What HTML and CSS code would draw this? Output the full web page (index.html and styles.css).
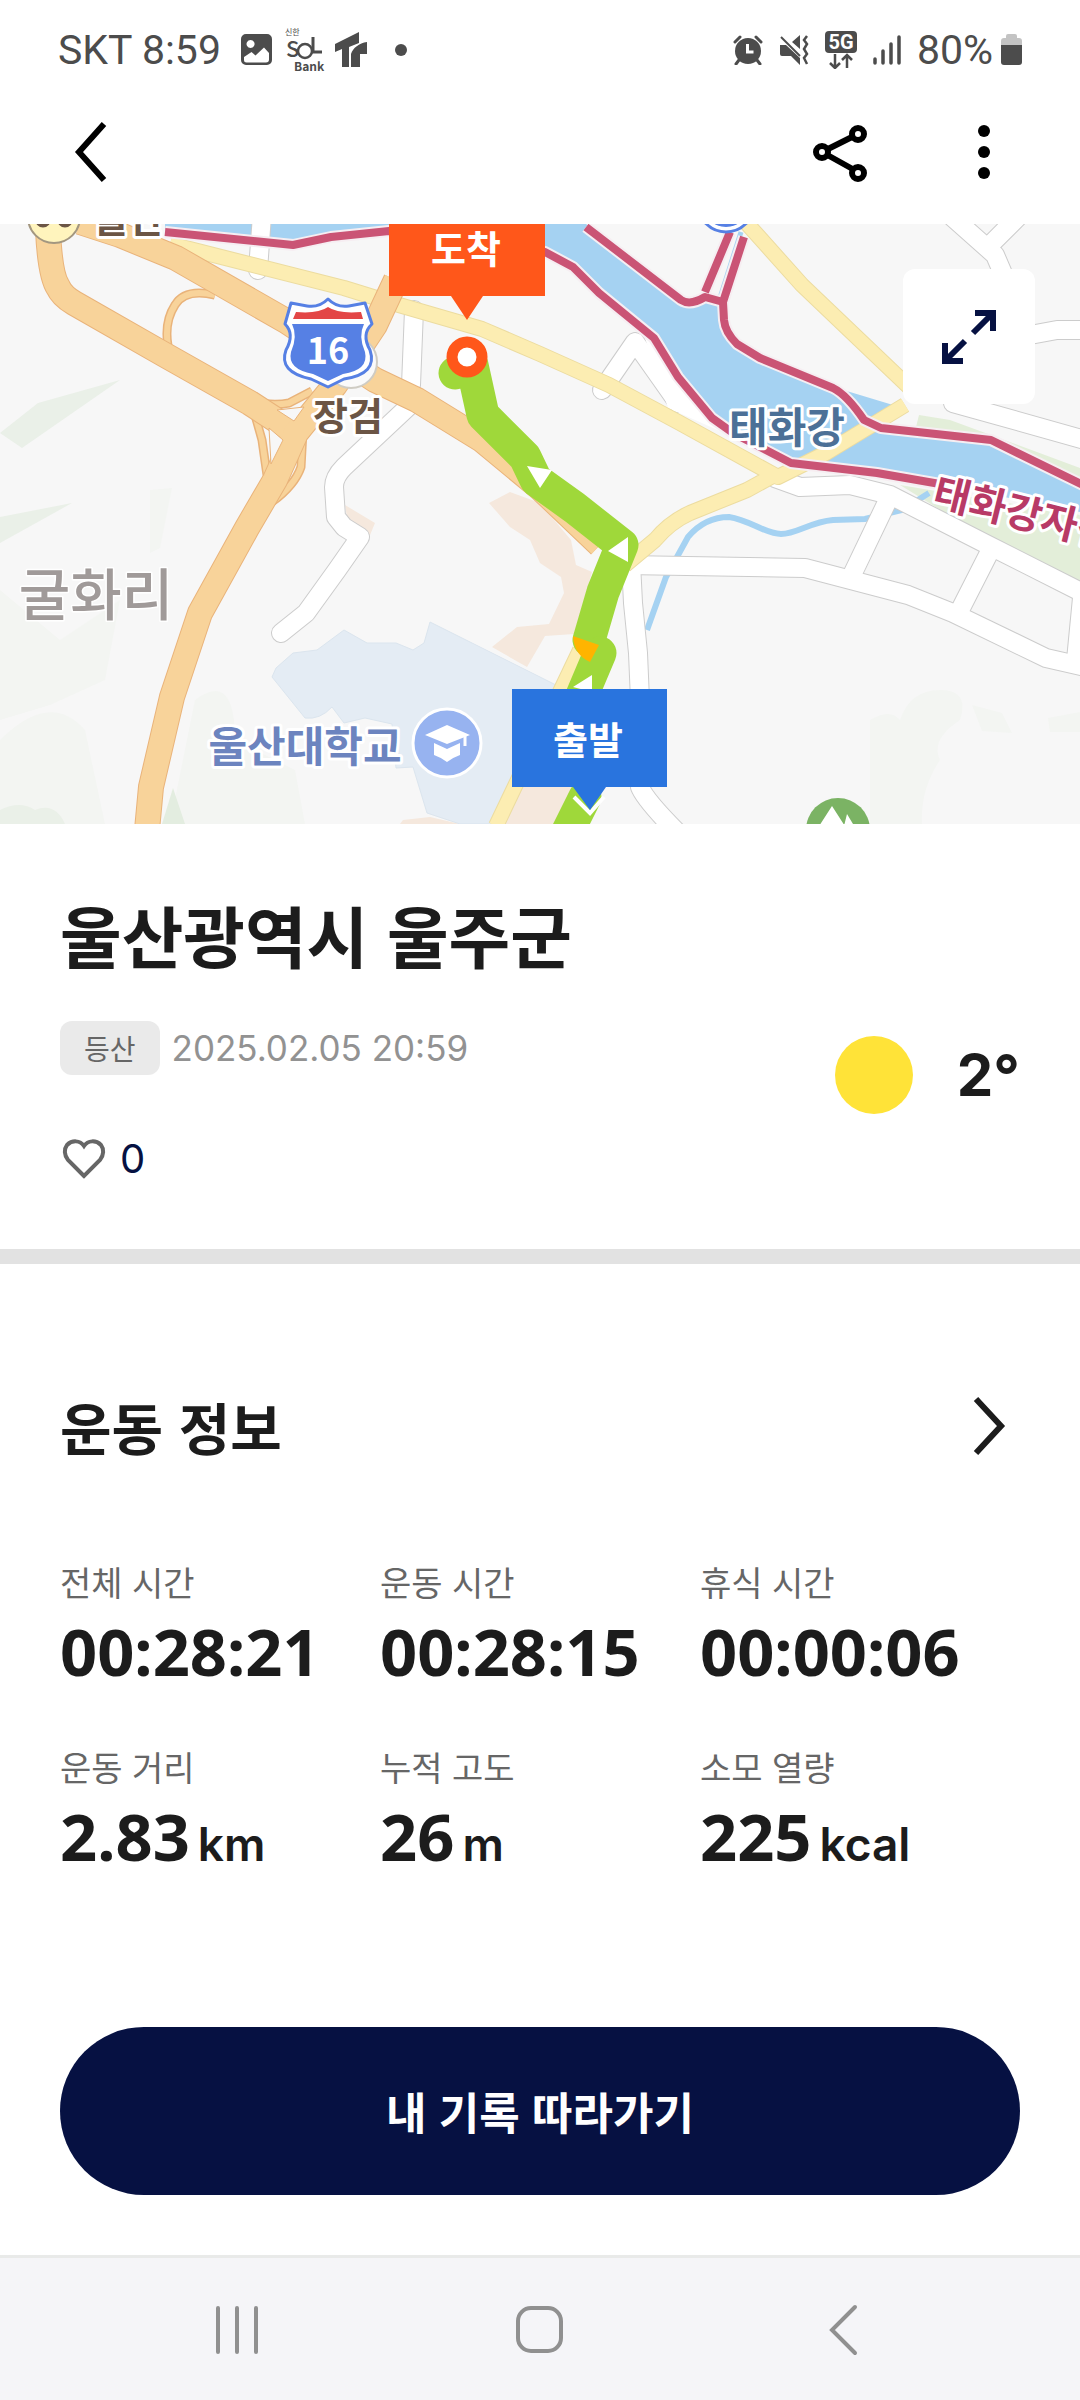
FILE: index.html
```html
<!DOCTYPE html>
<html lang="ko">
<head>
  <meta charset="UTF-8">
  <meta name="viewport" content="width=device-width, initial-scale=1">
  <title>운동 기록</title>
  <link rel="stylesheet" href="styles.css">
</head>
<body>
  <div class="status-bar">
    <div class="status-left">
      <span>SKT 8:59</span>
      <svg class="icon-image" width="32" height="32" viewBox="0 0 32 32">
        <path fill="#4c4c4c" fill-rule="evenodd" d="M5 0h21a5 5 0 0 1 5 5v21a5 5 0 0 1-5 5H5a5 5 0 0 1-5-5V5a5 5 0 0 1 5-5zM9.500 6a4 4 0 1 0 0.100 0zM3 23v3a2.500 2.500 0 0 0 2.500 2.500H25a3 3 0 0 0 3-3V19l-5-5.500-8.500 8L10.500 18z"/>
      </svg>
      <svg class="icon-sol" width="42" height="46" viewBox="0 0 42 46">
        <text class="sol-small" x="0" y="8">신한</text>
        <text class="sol-big" x="1" y="30">S</text>
        <circle cx="20" cy="24" r="7" fill="none" stroke="#4c4c4c" stroke-width="2.500"/>
        <path d="M28 10v15h9" fill="none" stroke="#4c4c4c" stroke-width="3"/>
        <text class="sol-bank" x="9" y="44">Bank</text>
      </svg>
      <svg class="icon-tr" width="32" height="36" viewBox="0 0 32 36">
        <path fill="#4c4c4c" d="M0 12 24 0v11l-10 4v20H7V17l-7 3zM32 10v12h-7v13h-9V22c2-6 8-11 16-12z"/>
      </svg>
      <span class="dot"></span>
    </div>
    <div class="status-right">
      <svg width="30" height="30" viewBox="0 0 30 30">
        <circle cx="15" cy="16" r="13" fill="#4c4c4c"/>
        <path d="M2 7 7 2M23 2l5 5M6 25l-3 4M24 25l3 4" stroke="#4c4c4c" stroke-width="3" stroke-linecap="round"/>
        <path d="M14.500 9v8h6" fill="none" stroke="#fff" stroke-width="3"/>
      </svg>
      <svg width="30" height="30" viewBox="0 0 30 30">
        <path fill="#4c4c4c" d="M1 10h6l14 13v7l-9-9H3a2 2 0 0 1-2-2zM13 7l8-7v14z"/>
        <path d="M2 2l19 19" stroke="#4c4c4c" stroke-width="2"/>
        <path d="M28 1l-3 4 3 4-3 5 3 5-3 4 3 6" fill="none" stroke="#4c4c4c" stroke-width="2.500"/>
      </svg>
      <svg class="icon-5g" width="32" height="38" viewBox="0 0 32 38">
        <rect width="32" height="22" rx="4" fill="#4c4c4c"/>
        <text class="label-5g" x="16" y="18">5G</text>
        <path d="M10 23v13M5 32l5 5 5-5M22 37V24M17 29l5-5 5 5" fill="none" stroke="#4c4c4c" stroke-width="2.500"/>
      </svg>
      <svg class="icon-signal" width="28" height="30" viewBox="0 0 28 30">
        <path d="M2 24v4M10 16v12M18 9v19M26 2v26" stroke="#4c4c4c" stroke-width="3.500" stroke-linecap="round"/>
      </svg>
      <span>80%</span>
      <svg class="icon-battery" width="21" height="32" viewBox="0 0 21 32">
        <path fill="#c3c3c3" d="M5 4V2a2 2 0 0 1 2-2h7a2 2 0 0 1 2 2v2h2a3 3 0 0 1 3 3v6H0V7a3 3 0 0 1 3-3z"/>
        <path fill="#4c4c4c" d="M0 11h21v17a3 3 0 0 1-3 3H3a3 3 0 0 1-3-3z"/>
      </svg>
    </div>
  </div>

  <header class="app-bar">
    <button class="icon-btn" aria-label="뒤로">
      <svg width="64" height="64" viewBox="0 0 64 64">
        <path d="M48 4 23 32l25 28" fill="none" stroke="#000" stroke-width="6"/>
      </svg>
    </button>
    <div class="app-actions">
      <button class="icon-btn" aria-label="공유">
        <svg width="64" height="64" viewBox="0 0 64 64">
          <path d="M14 32 50 14M14 32l36 20" stroke="#000" stroke-width="6"/>
          <g fill="#fff" stroke="#000" stroke-width="6">
            <circle cx="14" cy="32" r="6"/>
            <circle cx="50" cy="14" r="6"/>
            <circle cx="50" cy="53" r="6"/>
          </g>
        </svg>
      </button>
      <button class="icon-btn" aria-label="더보기">
        <svg width="64" height="64" viewBox="0 0 64 64">
          <circle cx="32" cy="11" r="6"/>
          <circle cx="32" cy="32" r="6"/>
          <circle cx="32" cy="53" r="6"/>
        </svg>
      </button>
    </div>
  </header>

  <div class="map">
    <svg class="map-canvas" viewBox="0 224 1080 600" preserveAspectRatio="xMidYMid slice">
      <rect x="0" y="224" width="1080" height="600" fill="#f7f7f7"/>

      <!-- land -->
      <path fill="#f3f5f2" d="M0 590 60 640l60-40-15 80-55 25-50 15zM0 740q50-50 85-10l20 94H0zM195 700q40-30 40 40l60 30 10 54H170zM870 720q20-12 30 0 10-30 40-30 30 0 20 30-30 20-20 40-20 30-18 64h-52zM972 705l30 8 10 20-30-2zM1048 718l32-6v20h-30zM150 490l22-2-12 60-10 5z"/>
      <path fill="#eaf0e8" d="M0 433 38 403 120 380 22 448zM0 517 72 503 0 543zM0 810q20-10 35 0 20-8 30 14H0z"/>
      <path fill="#e3ede0" d="M173 788 185 824H162z"/>
      <path fill="#e3eed9" d="M900 485 1080 515V584L960 522zM919 415 950 420 1080 468V480L1000 440 916 427z"/>
      <path fill="#f5e8dd" d="M489 503 510 492 540 503 571 540 576 565 592 572 584 600 574 634 545 636 527 667 492 647 517 627 549 624 564 593 561 577 540 563 530 540 510 527zM345 505l30 18-5 12-22-12zM403 820l27-3 30 7h-60zM520 787h60l-15 37h-60z"/>
      <path fill="#e4ecf4" stroke="#dbe5ee" d="M430 622 472 643 540 677 560 687 518 787 490 824H460L427 813 413 767 396 768 392 724 365 718 344 723 332 707Q320 720 305 718L272 677 276 668 293 653 317 650 344 630 367 643 396 643 413 650 424 643z"/>

      <!-- river -->
      <path fill="#a5d2f2" d="M165 224H586L681 300 692 303 705 297 723 302 724 320 733 340 760 358 833 388 850 392 893 405 881 428 991 440 1080 483V512L933 483 877 473 791 463 733 433 712 418 678 377 654 338 599 293 573 267 545 252 389 231 331 237 293 245 165 232z"/>
      <path d="M741 232 720 298" stroke="#a5d2f2" stroke-width="5"/>
      <path d="M647 630 666 577 688 537Q705 517 729 517C750 520 765 534 781 534S810 522 833 520L865 519 902 510 929 493" fill="none" stroke="#a5d2f2" stroke-width="6"/>

      <!-- minor roads: grey casing, white fill -->
      <g class="road casing">
        <path d="M262 215 258 270"/>
        <path d="M414 310 411 385M408 407 344 467Q334 477 334 487L336 517 344 527 360 537 337 570 306 613 281 633"/>
        <path d="M602 390 635 342 678 403"/>
        <path d="M950 215 995 255 1010 290M1020 215 990 245"/>
        <path d="M1030 335 1057 330 1085 330"/>
        <path d="M953 403 1085 440"/>
        <path d="M775 478 800 487 850 485 890 495 939 520 988 545 1085 594"/>
        <path d="M888 500 852 575"/>
        <path d="M625 565 805 568 908 595 953 613 1046 658 1085 667"/>
        <path d="M988 555 960 610M1082 598 1076 660"/>
        <path d="M631 563 633 603 638 653 640 700 640 787Q645 800 680 835"/>
      </g>
      <g class="road">
        <path d="M262 215 258 270"/>
        <path d="M414 310 411 385M408 407 344 467Q334 477 334 487L336 517 344 527 360 537 337 570 306 613 281 633"/>
        <path d="M602 390 635 342 678 403"/>
        <path d="M950 215 995 255 1010 290M1020 215 990 245"/>
        <path d="M1030 335 1057 330 1085 330"/>
        <path d="M953 403 1085 440"/>
        <path d="M775 478 800 487 850 485 890 495 939 520 988 545 1085 594"/>
        <path d="M888 500 852 575"/>
        <path d="M625 565 805 568 908 595 953 613 1046 658 1085 667"/>
        <path d="M988 555 960 610M1082 598 1076 660"/>
        <path d="M631 563 633 603 638 653 640 700 640 787Q645 800 680 835"/>
      </g>
      <path fill="#fff" d="M645 338 655 338 679 379 712 420 740 440 668 408z"/>

      <!-- main roads -->
      <g class="road-yellow casing">
        <path d="M170 244 241 262 344 288 399 305 482 329 540 354 609 385 678 422 778 477 826 453 905 405M778 473 747 490 690 513Q670 522 655 540L625 565"/>
        <path d="M742 218 802 285 910 388M580 650 496 826"/>
      </g>
      <g class="road-yellow">
        <path d="M170 244 241 262 344 288 399 305 482 329 540 354 609 385 678 422 778 477 826 453 905 405M778 473 747 490 690 513Q670 522 655 540L625 565"/>
        <path d="M742 218 802 285 910 388M580 650 496 826"/>
      </g>
      <g class="ramp casing">
        <path d="M215 295Q185 288 175 305 164 322 168 346M250 402Q275 406 289 403L312 391M255 415 262 440 267 475M303 430 301 467Q295 485 272 502"/>
      </g>
      <g class="ramp">
        <path d="M215 295Q185 288 175 305 164 322 168 346M250 402Q275 406 289 403L312 391M255 415 262 440 267 475M303 430 301 467Q295 485 272 502"/>
      </g>
      <g class="road-orange casing">
        <path d="M48 230Q50 275 58 287 62 296 74 303L165 355 250 403 296 433"/>
        <path d="M80 222 120 235 176 258 286 321 375 380 417 400 482 440 540 488 600 545"/>
        <path d="M396 280 375 325 335 385 296 433 275 480 247 528 200 613 172 697 151 787 147 830"/>
      </g>
      <g class="road-orange">
        <path d="M48 230Q50 275 58 287 62 296 74 303L165 355 250 403 296 433"/>
        <path d="M80 222 120 235 176 258 286 321 375 380 417 400 482 440 540 488 600 545"/>
        <path d="M396 280 375 325 335 385 296 433 275 480 247 528 200 613 172 697 151 787 147 830"/>
      </g>
      <path fill="#f7f7f7" stroke="#e9b37a" d="M277 410 304 407 294 421zM269 428 283 440 271 464z"/>

      <!-- cycle path -->
      <g class="cycle halo">
        <path d="M165 232 293 245 331 237 389 231 545 252 573 267 599 293 654 338 678 377 712 418 733 433 791 463 877 473 940 484"/>
        <path d="M586 227 681 300Q690 306 705 297L723 302 724 320Q725 332 737 344L760 358 833 388Q847 395 864 420L881 428 991 440 1085 486M723 302 744 237M705 292 730 232"/>
      </g>
      <g class="cycle">
        <path d="M165 232 293 245 331 237 389 231 545 252 573 267 599 293 654 338 678 377 712 418 733 433 791 463 877 473 940 484"/>
        <path d="M586 227 681 300Q690 306 705 297L723 302 724 320Q725 332 737 344L760 358 833 388Q847 395 864 420L881 428 991 440 1085 486M723 302 744 237M705 292 730 232"/>
      </g>

      <!-- places -->
      <circle cx="54" cy="217" r="26" fill="#fff4bd" stroke="#a39780" stroke-width="2"/>
      <path d="M38 223q5 5 10 0M60 223q5 5 10 0" fill="none" stroke="#6b5545" stroke-width="4"/>
      <circle cx="726" cy="204" r="28" fill="#fff" stroke="#5680e4" stroke-width="3"/>
      <circle cx="726" cy="204" r="23" fill="#5680e4"/>
      <circle cx="351" cy="362" r="26" fill="#fafafa" stroke="#cfccc4" stroke-width="2"/>
      <path fill="#fff" stroke="#5680e4" stroke-width="3" stroke-linejoin="round" d="M328 299Q337 308 349 306L365 303 372 324Q361 334 370 350 378 374 344 379L328 387 311 379Q278 372 286 350 295 334 285 324L291 303 307 306Q319 308 328 299z"/>
      <path fill="#e34646" d="M296 312Q318 314 328 307 338 314 361 312L363 319H293z"/>
      <path fill="#5680e4" d="M292 324H364Q358 336 365 352 369 370 343 374L328 381 313 374Q287 369 291 352 298 336 292 324z"/>
      <text class="map-text shield" x="328" y="364">16</text>

      <text class="map-text place brown" x="129" y="232">울산</text>
      <text class="map-text place brown" x="348" y="430">장검</text>
      <text class="map-text place river" x="787" y="443">태화강</text>
      <text class="map-text trail" x="931" y="505" transform="rotate(14 931 505)">태화강자전거길</text>
      <text class="map-text district" x="96" y="615">굴화리</text>
      <text class="map-text place school" x="305" y="762">울산대학교</text>
      <circle cx="447" cy="743" r="34" fill="#97b3f0" stroke="#fff" stroke-width="3"/>
      <path fill="#fff" d="M447 725 470 735 447 744 425 735zM434 743l13 6 13-6v12q-6 2-13 7-7-5-13-7z"/>
      <path d="M465 736v10" stroke="#fff" stroke-width="3"/>
      <circle cx="838" cy="830" r="32" fill="#7bb364"/>
      <path fill="#fff" d="M832 806 850 834H814zM847 814l12 20H842z"/>

      <!-- recorded route -->
      <path class="route" d="M455 373 472 365 483 415 525 457 536 480 575 508 622 545 603 592 589 640"/>
      <path class="route" d="M600 653 578 705M585 797 566 835"/>
      <path fill="#ffb400" d="M573 636 599 645 590 662Q574 655 573 636z"/>
      <path fill="#fff" d="M527 466 552 470 540 488zM608 551 628 537V562zM573 687 592 675V692z"/>
      <path d="M574 797 590 813 604 797" fill="none" stroke="#fff" stroke-width="4"/>

      <circle cx="467" cy="357" r="15" fill="#fff" stroke="#ff571a" stroke-width="11"/>
      <path fill="#ff571a" d="M389 220H545V296H483L467 320 451 296H389z"/>
      <text class="map-text flag" x="466" y="263">도착</text>
      <path fill="#2974de" d="M512 689H667V787H606L590 810 573 787H512z"/>
      <text class="map-text flag" x="588" y="754">출발</text>
    </svg>
    <button class="expand-btn" aria-label="지도 확대">
      <svg width="56" height="56" viewBox="0 0 56 56">
        <path d="M34 4h18v18M51 5 32 24M4 34v18h18M5 51l19-19" fill="none" stroke="#061142" stroke-width="6"/>
      </svg>
    </button>
  </div>

  <section class="summary">
    <h1>울산광역시 울주군</h1>
    <div class="summary-row">
      <div>
        <div class="meta">
          <span class="chip">등산</span>
          <time class="date">2025.02.05 20:59</time>
        </div>
        <button class="like">
          <svg width="44" height="40" viewBox="0 0 44 40">
            <path d="M22 37 6 21C2 16 2 10 5 6 10 1 18 1 22 7 26 1 34 1 39 6c3 4 3 10-1 15z" fill="none" stroke="#666" stroke-width="4"/>
          </svg>
          <span>0</span>
        </button>
      </div>
      <div class="weather">
        <span class="sun"></span>
        <span>2°</span>
      </div>
    </div>
  </section>

  <section class="workout">
    <div class="section-head">
      <h2>운동 정보</h2>
      <button class="icon-btn" aria-label="운동 정보 자세히">
        <svg width="64" height="64" viewBox="0 0 64 64">
          <path d="M20 5 45 32 20 59" fill="none" stroke="#1c1c1c" stroke-width="6"/>
        </svg>
      </button>
    </div>
    <dl class="stats">
      <div>
        <dt>전체 시간</dt>
        <dd>00:28:21</dd>
      </div>
      <div>
        <dt>운동 시간</dt>
        <dd>00:28:15</dd>
      </div>
      <div>
        <dt>휴식 시간</dt>
        <dd>00:00:06</dd>
      </div>
      <div>
        <dt>운동 거리</dt>
        <dd>2.83<span class="unit">km</span></dd>
      </div>
      <div>
        <dt>누적 고도</dt>
        <dd>26<span class="unit">m</span></dd>
      </div>
      <div>
        <dt>소모 열량</dt>
        <dd>225<span class="unit">kcal</span></dd>
      </div>
    </dl>
    <button class="follow-btn">내 기록 따라가기</button>
  </section>

  <nav class="nav-bar">
    <button class="icon-btn" aria-label="최근 앱">
      <svg width="64" height="64" viewBox="0 0 64 64">
        <path d="M13 10v44M32 10v44M51 10v44" stroke="#909090" stroke-width="4" stroke-linecap="round"/>
      </svg>
    </button>
    <button class="icon-btn" aria-label="홈">
      <svg width="64" height="64" viewBox="0 0 64 64">
        <rect x="10" y="10" width="43" height="43" rx="13" fill="none" stroke="#909090" stroke-width="4"/>
      </svg>
    </button>
    <button class="icon-btn" aria-label="뒤로">
      <svg width="64" height="64" viewBox="0 0 64 64">
        <path d="M44 9 21 32l23 23" fill="none" stroke="#909090" stroke-width="4" stroke-linecap="round"/>
      </svg>
    </button>
  </nav>
</body>
</html>
```
FILE: styles.css
```css
* {
  box-sizing: border-box;
}
body {
  margin: 0;
  min-height: 100vh;
  display: flex;
  flex-direction: column;
  background: #fff;
  color: #1c1c1c;
  font-family: "Noto Sans CJK KR", sans-serif;
}
h1, h2, dl, dd {
  margin: 0;
}
button {
  padding: 0;
  border: none;
  background: none;
  font-family: inherit;
  color: inherit;
  cursor: pointer;
}
svg {
  display: block;
}

/* status bar */
.status-bar {
  display: flex;
  justify-content: space-between;
  align-items: center;
  height: 100px;
  padding: 0 58px;
  font-family: Roboto, sans-serif;
  font-size: 41px;
  color: #4c4c4c;
}
.status-left, .status-right {
  display: flex;
  align-items: center;
}
.status-left {
  gap: 12px;
}
.status-right {
  gap: 16px;
}
.icon-image {
  margin-left: 8px;
}
.icon-tr {
  margin-left: -4px;
}
.icon-battery {
  margin-left: -8px;
}
.dot {
  width: 12px;
  height: 12px;
  margin-left: 16px;
  border-radius: 50%;
  background: #4c4c4c;
}
.sol-small, .sol-big, .sol-bank {
  fill: #4c4c4c;
  font-family: "Noto Sans CJK KR", sans-serif;
}
.sol-small {
  font-size: 8px;
}
.sol-big {
  font-size: 22px;
  font-weight: 500;
}
.sol-bank {
  font-size: 12px;
  font-weight: 700;
}
.label-5g {
  fill: #fff;
  font-size: 20px;
  font-weight: 700;
  text-anchor: middle;
}

/* app bar */
.app-bar {
  display: flex;
  justify-content: space-between;
  align-items: center;
  height: 124px;
  padding: 0 64px 20px 56px;
}
.app-actions {
  display: flex;
  gap: 80px;
}

/* map */
.map {
  position: relative;
  height: 600px;
  overflow: hidden;
}
.map-canvas {
  width: 100%;
  height: 100%;
}
.road, .road-yellow, .road-orange, .ramp, .cycle, .route {
  fill: none;
  stroke-linejoin: round;
}
.road {
  stroke: #fff;
  stroke-width: 18px;
  stroke-linecap: round;
}
.road.casing {
  stroke: #ccc;
  stroke-width: 20px;
}
.road-yellow {
  stroke: #fcedb2;
  stroke-width: 14px;
}
.road-yellow.casing {
  stroke: #ecdca0;
  stroke-width: 16px;
}
.ramp {
  stroke: #f8d39a;
  stroke-width: 6px;
}
.ramp.casing {
  stroke: #e9b37a;
  stroke-width: 9px;
}
.road-orange {
  stroke: #f8d39a;
  stroke-width: 24px;
}
.road-orange.casing {
  stroke: #e9b37a;
  stroke-width: 26px;
}
.cycle {
  stroke: #ca5475;
  stroke-width: 8px;
}
.cycle.halo {
  stroke: #f6eef2;
  stroke-width: 12px;
}
.route {
  stroke: #9fd83a;
  stroke-width: 33px;
  stroke-linecap: round;
}
.map-text {
  font-weight: 700;
  text-anchor: middle;
  paint-order: stroke;
  stroke: #fff;
  stroke-width: 6px;
  stroke-linejoin: round;
}
.place {
  font-size: 42px;
}
.brown {
  font-size: 38px;
  fill: #6b5545;
}
.river {
  fill: #4c7097;
}
.school {
  fill: #6c84bf;
}
.trail {
  font-size: 40px;
  fill: #b83a66;
  text-anchor: start;
}
.district {
  font-size: 56px;
  font-weight: 500;
  fill: #a09a99;
  stroke-width: 3px;
}
.shield, .flag {
  font-size: 38px;
  fill: #fff;
  stroke: none;
}
.shield {
  font-size: 36px;
}
.expand-btn {
  position: absolute;
  top: 45px;
  right: 45px;
  display: flex;
  align-items: center;
  justify-content: center;
  width: 132px;
  height: 135px;
  border-radius: 12px;
  background: #fff;
}

/* title, date, weather */
.summary {
  padding: 60px 60px 66px;
  border-bottom: 15px solid #e2e2e2;
}
h1 {
  font-size: 67px;
  line-height: 100px;
  font-weight: 700;
}
.summary-row {
  display: flex;
  justify-content: space-between;
  align-items: flex-start;
  margin-top: 37px;
}
.meta {
  display: flex;
  align-items: center;
  gap: 12px;
}
.chip {
  padding: 0 24px;
  border-radius: 12px;
  background: #eaeaea;
  color: #666;
  font-size: 28px;
  line-height: 54px;
}
.date {
  font-family: Inter, sans-serif;
  font-size: 35px;
  color: #929292;
}
.like {
  display: flex;
  align-items: center;
  gap: 14px;
  margin-top: 60px;
  padding-left: 2px;
  font-family: Inter, sans-serif;
  font-size: 40px;
  line-height: 48px;
  color: #061142;
}
.weather {
  display: flex;
  align-items: center;
  gap: 44px;
  margin-top: 15px;
  font-family: Inter, sans-serif;
  font-size: 58px;
  line-height: 78px;
  font-weight: 700;
}
.sun {
  width: 78px;
  height: 78px;
  border-radius: 50%;
  background: #ffe338;
}

/* workout */
.workout {
  flex: 1;
  padding: 120px 60px 60px;
}
.section-head {
  display: flex;
  justify-content: space-between;
  align-items: center;
}
h2 {
  font-size: 56px;
  line-height: 84px;
  font-weight: 700;
}
.stats {
  display: grid;
  grid-template-columns: repeat(3, 1fr);
  row-gap: 47px;
  margin-top: 88px;
}
dt {
  font-size: 34px;
  line-height: 52px;
  color: #666;
}
dd {
  font-family: "Noto Sans", sans-serif;
  font-size: 65px;
  line-height: 86px;
  font-weight: 700;
}
.unit {
  margin-left: 8px;
  font-family: Inter, sans-serif;
  font-size: 46px;
  font-weight: 600;
}
.follow-btn {
  width: 100%;
  height: 168px;
  margin-top: 140px;
  border-radius: 84px;
  background: #061142;
  color: #fff;
  font-size: 44px;
  font-weight: 700;
}

/* system navigation */
.nav-bar {
  display: grid;
  grid-template-columns: repeat(3, 1fr);
  align-items: center;
  justify-items: center;
  height: 147px;
  padding: 0 86px;
  border-top: 3px solid #e9eae9;
  background: #f5f5f8;
}
```
